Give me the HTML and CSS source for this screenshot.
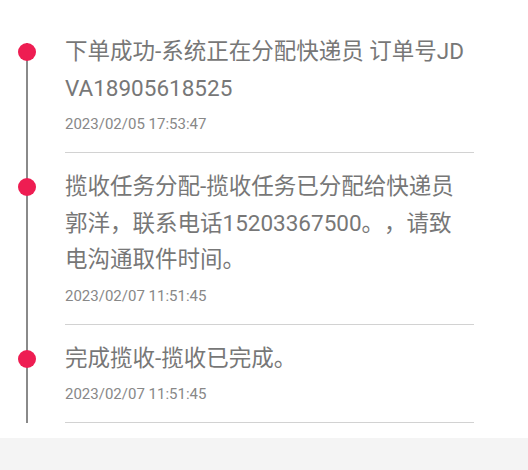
FILE: index.html
```html
<!DOCTYPE html>
<html lang="zh-CN">
<head>
  <meta charset="UTF-8" />
  <meta name="viewport" content="width=device-width, initial-scale=1.0"/>
  <title>物流跟踪</title>
  <link rel="stylesheet" href="styles.css">
</head>
<body>

  <div class="track">
    <div class="track-item">
      <div class="track-dot"></div>
      <div class="track-body">
        <p class="track-text">下单成功-系统正在分配快递员 订单号JDVA18905618525</p>
        <p class="track-time">2023/02/05 17:53:47</p>
      </div>
    </div>

    <div class="track-item">
      <div class="track-dot"></div>
      <div class="track-body">
        <p class="track-text">揽收任务分配-揽收任务已分配给快递员郭洋，联系电话15203367500。，请致电沟通取件时间。</p>
        <p class="track-time">2023/02/07 11:51:45</p>
      </div>
    </div>

    <div class="track-item">
      <div class="track-dot"></div>
      <div class="track-body">
        <p class="track-text">完成揽收-揽收已完成。</p>
        <p class="track-time">2023/02/07 11:51:45</p>
      </div>
    </div>
  </div>

</body>
</html>
```

FILE: styles.css
```css
html, body {
  margin: 0;
  padding: 0;
}
body {
  font-family: Roboto, "Noto Sans CJK SC", sans-serif;
  background-color: #f4f4f4;
  color: #777;
  min-height: 470px;
}
p {
  margin: 0;
}
.track {
  background-color: #fff;
  padding: 18px 0 15px;
}
.track-item {
  display: flex;
  position: relative;
}
/* vertical line, 2px wide, centred at x=27 */
.track-item::before {
  content: "";
  position: absolute;
  left: 26px;
  top: 0;
  bottom: 0;
  width: 2px;
  background-color: #8a8a8a;
}
.track-item:first-child::before {
  top: 25px;
}
.track-dot {
  position: absolute;
  left: 18px;
  top: 25px;
  width: 18px;
  height: 18px;
  border-radius: 50%;
  background-color: #ee1d52;
}
.track-body {
  margin-left: 65px;
  width: 409px;
  padding: 15px 0 17px;
  border-bottom: 1px solid #d2d2d2;
}
.track-text {
  padding-right: 6px;
  font-size: 22.5px;
  line-height: 36.5px;
  word-break: break-all;
  text-spacing-trim: space-all;
}
.track-time {
  margin-top: 7px;
  font-size: 15px;
  line-height: 22px;
  color: #888;
}
```
